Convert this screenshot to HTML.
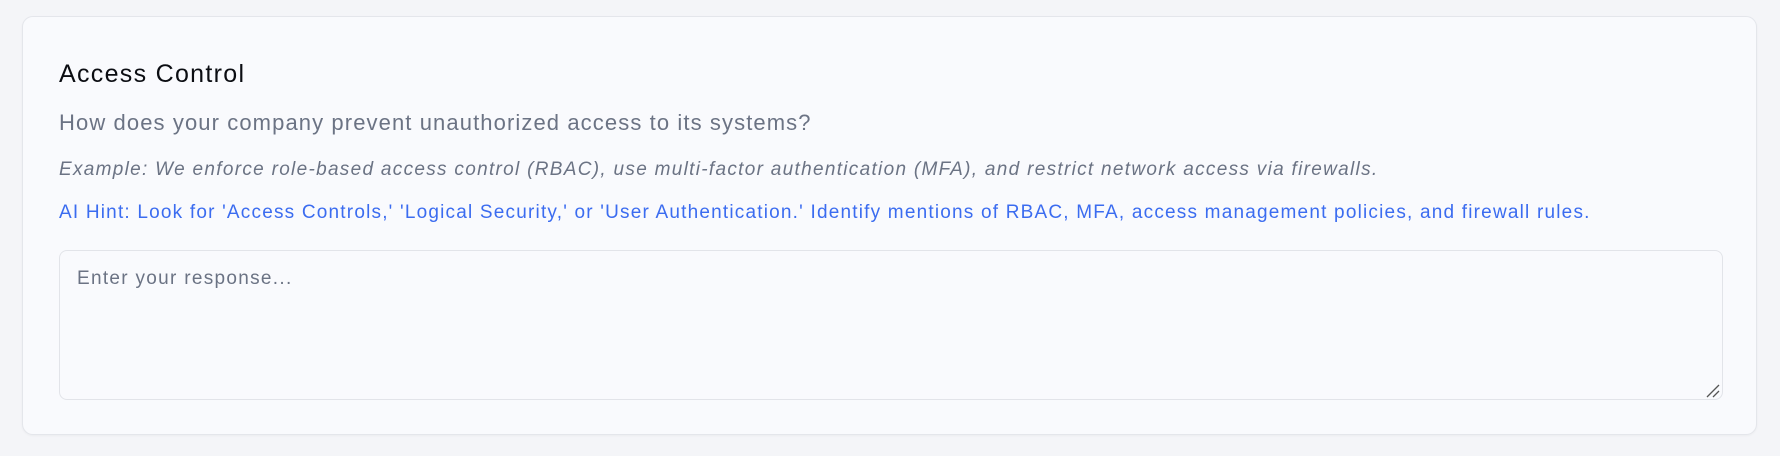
<!DOCTYPE html>
<html><head><style>
body{margin:0;background:#f4f5f8;width:1780px;height:456px;font-family:"Liberation Sans",sans-serif;position:relative;overflow:hidden}
.card{position:absolute;left:22px;top:16px;width:1735px;height:419px;background:#f9fafd;border:1px solid #e4e6eb;border-radius:11px;box-sizing:border-box;box-shadow:0 1px 2px rgba(0,0,0,.04)}
.t{position:absolute;left:59px;white-space:nowrap}
.ta{position:absolute;left:59px;top:250px;width:1664px;height:150px;border:1px solid #e2e4e9;border-radius:8px;box-sizing:border-box;background:#f9fafd}
</style></head><body>
<div class="card"></div>
<div class="t" style="top:60px;font-size:25px;letter-spacing:1.3px;color:#0b0d12">Access Control</div>
<div class="t" style="top:110px;font-size:22px;letter-spacing:1.1px;color:#6b7384">How does your company prevent unauthorized access to its systems?</div>
<div class="t" style="top:159px;font-size:19px;letter-spacing:1.3px;color:#6b7384;font-style:italic">Example: We enforce role-based access control (RBAC), use multi-factor authentication (MFA), and restrict network access via firewalls.</div>
<div class="t" style="top:202px;font-size:19px;letter-spacing:1.2px;color:#3b6cf0">AI Hint: Look for 'Access Controls,' 'Logical Security,' or 'User Authentication.' Identify mentions of RBAC, MFA, access management policies, and firewall rules.</div>
<div class="ta"></div>
<div class="t" style="left:77px;top:268px;font-size:19px;letter-spacing:1.3px;color:#6b7384">Enter your response...</div>
<svg style="position:absolute;left:1705px;top:383px" width="16" height="16"><path d="M2 14L14 2M8 14L14 8" stroke="#555" stroke-width="1.3"/></svg>
</body></html>
